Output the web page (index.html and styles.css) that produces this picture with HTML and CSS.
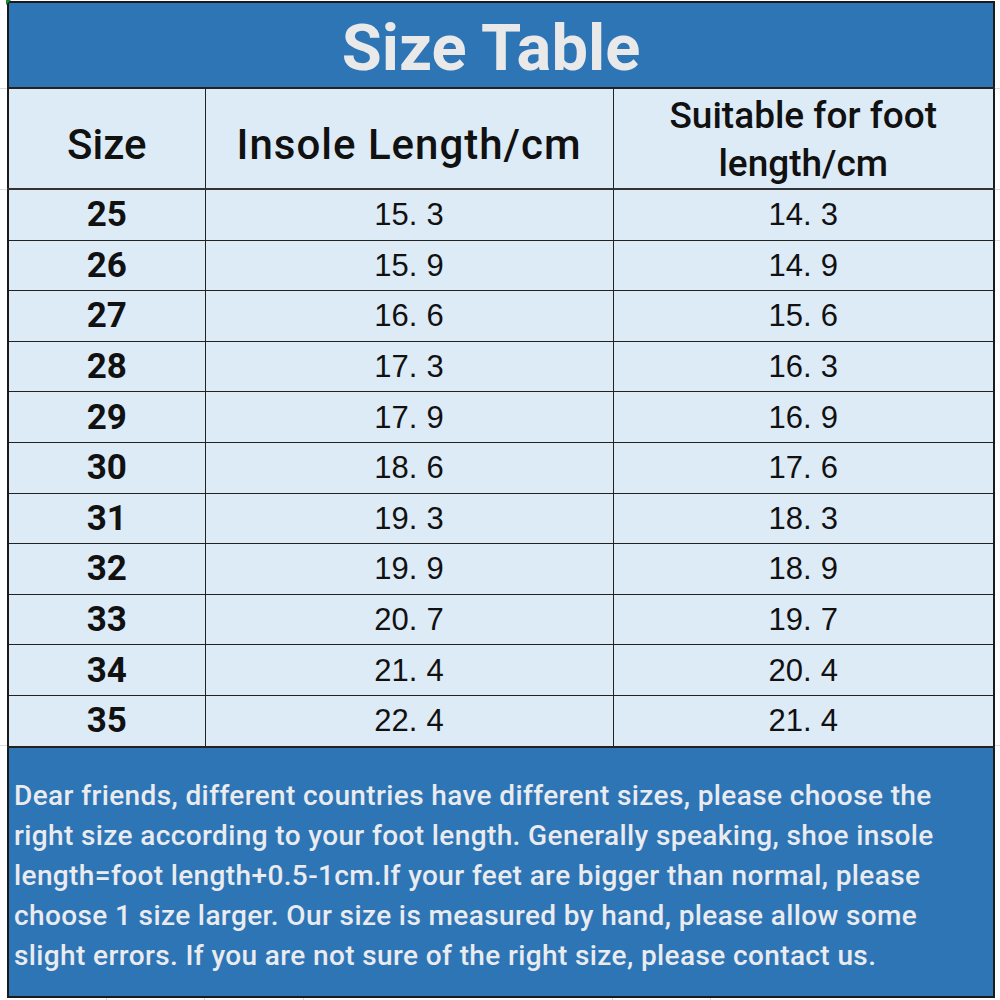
FILE: index.html
```html
<!DOCTYPE html>
<html lang="en">
<head>
<meta charset="utf-8">
<title>Size Table</title>
<link rel="stylesheet" href="styles.css">
</head>
<body>
<div class="sheet">
  <span class="corner"></span>
  <table class="size-table">
    <colgroup>
      <col class="c1"><col class="c2"><col class="c3">
    </colgroup>
    <thead>
      <tr class="title-row"><th colspan="3" class="title">Size Table</th></tr>
      <tr class="head-row">
        <th>Size</th>
        <th>Insole Length/cm</th>
        <th class="two-line">Suitable for foot<br>length/cm</th>
      </tr>
    </thead>
    <tbody>
      <tr><td class="sz">25</td><td>15<span class="dot">.</span>3</td><td>14<span class="dot">.</span>3</td></tr>
      <tr><td class="sz">26</td><td>15<span class="dot">.</span>9</td><td>14<span class="dot">.</span>9</td></tr>
      <tr><td class="sz">27</td><td>16<span class="dot">.</span>6</td><td>15<span class="dot">.</span>6</td></tr>
      <tr><td class="sz">28</td><td>17<span class="dot">.</span>3</td><td>16<span class="dot">.</span>3</td></tr>
      <tr><td class="sz">29</td><td>17<span class="dot">.</span>9</td><td>16<span class="dot">.</span>9</td></tr>
      <tr><td class="sz">30</td><td>18<span class="dot">.</span>6</td><td>17<span class="dot">.</span>6</td></tr>
      <tr><td class="sz">31</td><td>19<span class="dot">.</span>3</td><td>18<span class="dot">.</span>3</td></tr>
      <tr><td class="sz">32</td><td>19<span class="dot">.</span>9</td><td>18<span class="dot">.</span>9</td></tr>
      <tr><td class="sz">33</td><td>20<span class="dot">.</span>7</td><td>19<span class="dot">.</span>7</td></tr>
      <tr><td class="sz">34</td><td>21<span class="dot">.</span>4</td><td>20<span class="dot">.</span>4</td></tr>
      <tr><td class="sz">35</td><td>22<span class="dot">.</span>4</td><td>21<span class="dot">.</span>4</td></tr>
    </tbody>
    <tfoot>
      <tr class="note-row">
        <td colspan="3" class="note">Dear friends, different countries have different sizes, please choose the<br>right size according to your foot length. Generally speaking, shoe insole<br>length=foot length+0.5-1cm.If your feet are bigger than normal, please<br>choose 1 size larger. Our size is measured by hand, please allow some<br>slight errors. If you are not sure of the right size, please contact us.</td>
      </tr>
    </tfoot>
  </table>
</div>
</body>
</html>
```

FILE: styles.css
```css
html, body {
  margin: 0;
  padding: 0;
  background: #ffffff;
}

.sheet {
  position: relative;
  width: 1000px;
  height: 1000px;
  padding: 1px 0 0 7px;
  box-sizing: border-box;
  overflow: hidden;
  background:
    linear-gradient(#dcdcdc, #dcdcdc) 0 88px / 7px 1px no-repeat,
    linear-gradient(#dcdcdc, #dcdcdc) 0 189px / 7px 1px no-repeat,
    linear-gradient(#dcdcdc, #dcdcdc) 0 745px / 7px 1px no-repeat,
    linear-gradient(#dcdcdc, #dcdcdc) 993px 88px / 7px 1px no-repeat,
    linear-gradient(#dcdcdc, #dcdcdc) 993px 189px / 7px 1px no-repeat,
    linear-gradient(#dcdcdc, #dcdcdc) 993px 240px / 7px 1px no-repeat,
    linear-gradient(#dcdcdc, #dcdcdc) 993px 745px / 7px 1px no-repeat,
    linear-gradient(#dcdcdc, #dcdcdc) 106px 997px / 1px 3px no-repeat,
    linear-gradient(#dcdcdc, #dcdcdc) 204px 997px / 1px 3px no-repeat,
    linear-gradient(#dcdcdc, #dcdcdc) 303px 997px / 1px 3px no-repeat,
    linear-gradient(#dcdcdc, #dcdcdc) 612px 997px / 1px 3px no-repeat,
    linear-gradient(#dcdcdc, #dcdcdc) 710px 997px / 1px 3px no-repeat,
    #ffffff;
}

.corner {
  position: absolute;
  left: 6px;
  top: 0;
  width: 0;
  height: 0;
  border-top: 5px solid #1e8a2e;
  border-right: 5px solid transparent;
}

.size-table {
  border-collapse: collapse;
  width: 986px;
  table-layout: fixed;
  border: 2px solid #1a1a1a;
}

.c1 { width: 197px; }
.c2 { width: 408px; }
.c3 { width: 381px; }

.size-table th,
.size-table td {
  padding: 0;
  text-align: center;
  vertical-align: middle;
  border: 1px solid #222;
}

.title-row th {
  height: 86px;
  background: #2e75b6;
  color: #e9e9ea;
  font-family: Roboto, "Liberation Sans", sans-serif;
  font-weight: 700;
  font-size: 65px;
  line-height: 1;
  padding: 6px 20px 0 0;
  box-sizing: border-box;
  border-bottom: 2px solid #222;
}

.head-row th {
  height: 87px;
  background: #ddebf7;
  color: #111;
  font-family: Roboto, "Noto Sans", sans-serif;
  font-weight: 500;
  font-size: 42px;
  line-height: 50px;
  padding-top: 12px;
  border-bottom: 2px solid #333;
}

.head-row th:nth-child(2) {
  letter-spacing: 1px;
}

.head-row th.two-line {
  font-size: 37px;
  line-height: 48px;
  padding-top: 3px;
  height: 96px;
}

tbody td {
  height: 49.6px;
  background: #ddebf7;
  color: #111;
  font-family: "Liberation Sans", Arial, sans-serif;
  font-size: 31px;
  line-height: 1;
  padding-top: 3px;
  border-top: 2px solid #3a3a3a;
  border-bottom: 2px solid #3a3a3a;
}

tbody td.sz {
  font-family: Roboto, "Liberation Sans", sans-serif;
  font-weight: 700;
  font-size: 35px;
}

.dot {
  margin-right: 9px;
}

.note-row td.note {
  height: 220px;
  background: #2e75b6;
  color: #e9ebee;
  text-align: left;
  vertical-align: top;
  font-family: Roboto, "Liberation Sans", sans-serif;
  font-weight: 500;
  font-size: 28px;
  letter-spacing: 0.38px;
  line-height: 40px;
  padding: 28px 0 0 5px;
  white-space: nowrap;
  border-top: 2px solid #222;
}
```
